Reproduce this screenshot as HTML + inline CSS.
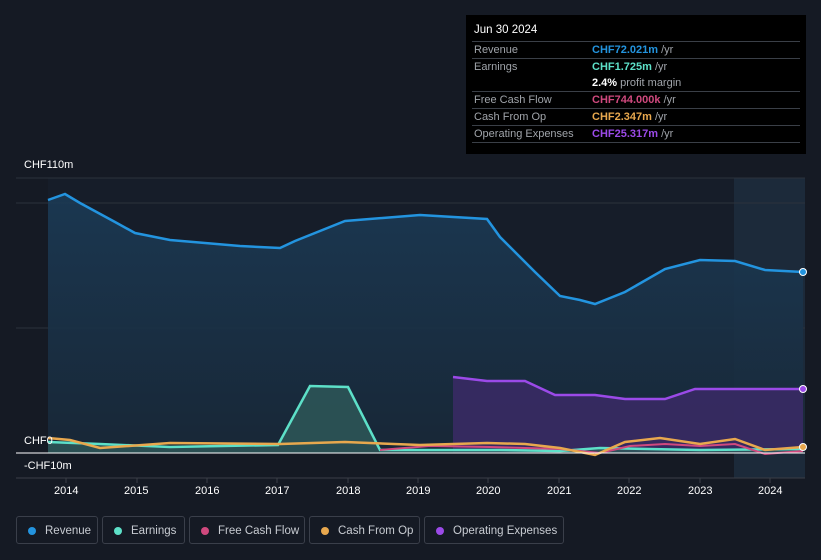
<!DOCTYPE html><html><head><style>
body{margin:0;width:821px;height:560px;background:#151a24;font-family:"Liberation Sans",sans-serif;overflow:hidden;position:relative}
.tt{position:absolute;left:466px;top:15px;width:340px;height:139px;background:#000;color:#fff;font-size:11px}
.tt .h{padding:9px 8px 0;font-size:11.5px;height:17px}
.row{display:flex;border-top:1px solid #3a3f47;margin:0 6px;height:16px;line-height:16px}
.row .k{width:118px;padding-left:2px;color:#a0a4aa}
.row b{font-weight:bold}.u{color:#a0a4aa}
.leg{position:absolute;top:516px;height:28px;border:1px solid #3a3f4a;border-radius:3px;color:#c8ccd2;font-size:11.5px;line-height:28px;box-sizing:border-box;padding-left:28px}
.leg i{position:absolute;left:11px;top:10px;width:8px;height:8px;border-radius:50%}
.ax{position:absolute;color:#fff;font-size:11px}
</style></head><body>
<svg width="821" height="560" style="position:absolute;left:0;top:0">
<defs><linearGradient id="rg" x1="0" y1="0" x2="0" y2="1"><stop offset="0" stop-color="#1b3a55"/><stop offset="1" stop-color="#182838"/></linearGradient></defs>
<rect x="48" y="178" width="757" height="275" fill="#161d29"/>
<rect x="734" y="178" width="71" height="300" fill="#1c2a3a"/>
<line x1="16" y1="178" x2="805" y2="178" stroke="#2c323c"/>
<line x1="16" y1="203" x2="805" y2="203" stroke="#2c323c"/>
<line x1="16" y1="328" x2="805" y2="328" stroke="#2c323c"/>
<line x1="16" y1="478" x2="805" y2="478" stroke="#3a3f47"/>
<path d="M48,200 L65,194 L80,203 L115,222 L135,233 L170,240 L240,246 L280,248 L295,241 L345,221 L420,215 L487,219 L500,237 L535,272 L560,296 L580,300 L595,304 L625,292 L665,269 L700,260 L735,261 L765,270 L803,272 L803,453 L48,453Z" fill="url(#rg)" opacity=".9"/>
<path d="M48,200 L65,194 L80,203 L115,222 L135,233 L170,240 L240,246 L280,248 L295,241 L345,221 L420,215 L487,219 L500,237 L535,272 L560,296 L580,300 L595,304 L625,292 L665,269 L700,260 L735,261 L765,270 L803,272" fill="none" stroke="#2394df" stroke-width="2.5"/>
<path d="M453,377 L487,381 L525,381 L555,395 L595,395 L625,399 L665,399 L695,389 L803,389 L803,453 L453,453Z" fill="#3b2a66" opacity=".85"/>
<path d="M453,377 L487,381 L525,381 L555,395 L595,395 L625,399 L665,399 L695,389 L803,389" fill="none" stroke="#9b4ae8" stroke-width="2.5"/>
<path d="M48,442 L100,444 L170,447 L278,445 L310,386 L348,387 L380,450 L500,450 L560,451 L600,448 L700,450 L803,449 L803,453 L48,453Z" fill="#2f5a5a" opacity=".8"/>
<path d="M48,442 L100,444 L170,447 L278,445 L310,386 L348,387 L380,450 L500,450 L560,451 L600,448 L700,450 L803,449" fill="none" stroke="#5de0c8" stroke-width="2.5"/>
<path d="M380,450 L430,446 L490,447 L560,449 L600,453 L630,446 L665,444 L700,446 L735,444 L765,454 L803,451" fill="none" stroke="#d0497e" stroke-width="2"/>
<path d="M48,438 L70,440 L100,448 L170,443 L280,444 L345,442 L420,445 L487,443 L525,444 L560,448 L595,455 L625,442 L660,438 L700,444 L735,439 L765,450 L803,447" fill="none" stroke="#e8a84e" stroke-width="2.5"/>
<line x1="16" y1="453" x2="805" y2="453" stroke="#fff" stroke-width="1"/>
<circle cx="803" cy="272" r="3.5" fill="#2394df" stroke="#fff"/>
<circle cx="803" cy="389" r="3.5" fill="#9b4ae8" stroke="#fff"/>
<circle cx="803" cy="447" r="3.5" fill="#e8a84e" stroke="#fff"/>
<g stroke="#3a3f47"><line x1="66" y1="478" x2="66" y2="483"/><line x1="137" y1="478" x2="137" y2="483"/><line x1="207" y1="478" x2="207" y2="483"/><line x1="277" y1="478" x2="277" y2="483"/><line x1="348" y1="478" x2="348" y2="483"/><line x1="418" y1="478" x2="418" y2="483"/><line x1="488" y1="478" x2="488" y2="483"/><line x1="559" y1="478" x2="559" y2="483"/><line x1="629" y1="478" x2="629" y2="483"/><line x1="700" y1="478" x2="700" y2="483"/><line x1="770" y1="478" x2="770" y2="483"/></g>
</svg>
<div class="ax" style="left:24px;top:159px">CHF110m</div>
<div class="ax" style="left:24px;top:435px">CHF0</div>
<div class="ax" style="left:24px;top:460px">-CHF10m</div>
<div class="ax" style="left:54px;top:485px">2014</div><div class="ax" style="left:124px;top:485px">2015</div><div class="ax" style="left:195px;top:485px">2016</div><div class="ax" style="left:265px;top:485px">2017</div><div class="ax" style="left:336px;top:485px">2018</div><div class="ax" style="left:406px;top:485px">2019</div><div class="ax" style="left:476px;top:485px">2020</div><div class="ax" style="left:547px;top:485px">2021</div><div class="ax" style="left:617px;top:485px">2022</div><div class="ax" style="left:688px;top:485px">2023</div><div class="ax" style="left:758px;top:485px">2024</div>
<div class="tt"><div class="h">Jun 30 2024</div>
<div class="row"><span class="k">Revenue</span><span><b style="color:#2394df">CHF72.021m</b> <span class="u">/yr</span></span></div>
<div class="row"><span class="k">Earnings</span><span><b style="color:#5de0c8">CHF1.725m</b> <span class="u">/yr</span></span></div>
<div class="row" style="border-top:none"><span class="k"></span><span><b>2.4%</b> <span class="u">profit margin</span></span></div>
<div class="row"><span class="k">Free Cash Flow</span><span><b style="color:#d0497e">CHF744.000k</b> <span class="u">/yr</span></span></div>
<div class="row"><span class="k">Cash From Op</span><span><b style="color:#e8a84e">CHF2.347m</b> <span class="u">/yr</span></span></div>
<div class="row"><span class="k">Operating Expenses</span><span><b style="color:#9b4ae8">CHF25.317m</b> <span class="u">/yr</span></span></div>
<div class="row" style="height:0"></div>
</div>
<div class="leg" style="left:16px;width:82px"><i style="background:#2394df"></i>Revenue</div>
<div class="leg" style="left:102px;width:83px"><i style="background:#5de0c8"></i>Earnings</div>
<div class="leg" style="left:189px;width:116px"><i style="background:#d0497e"></i>Free Cash Flow</div>
<div class="leg" style="left:309px;width:111px"><i style="background:#e8a84e"></i>Cash From Op</div>
<div class="leg" style="left:424px;width:140px"><i style="background:#9b4ae8"></i>Operating Expenses</div>
</body></html>
